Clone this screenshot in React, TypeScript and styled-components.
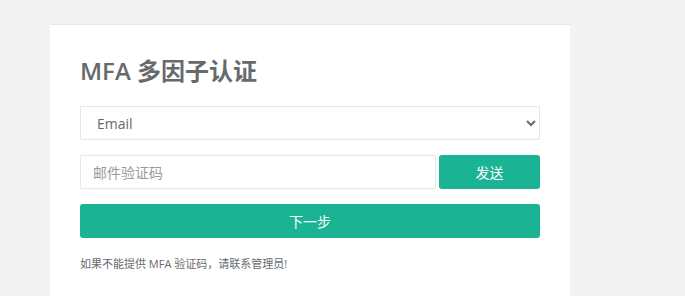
import styled, { createGlobalStyle } from 'styled-components'

const GlobalStyle = createGlobalStyle`
  html, body {
    margin: 0;
    padding: 0;
    background: #f3f3f4;
    font-family: 'Open Sans', 'Noto Sans CJK SC', sans-serif;
    color: #676a6c;
  }
`

const Page = styled.div`
  padding: 24px 0 0 50px;
  height: 272px;
  overflow: hidden;
`

const Card = styled.div`
  width: 460px;
  background: #fff;
  border-top: 1px solid #e7eaec;
  padding: 26px 30px 40px;
`

const Title = styled.h2`
  margin: 0 0 15px;
  font-size: 24px;
  font-weight: 600;
  line-height: 40px;
  color: #676a6c;
`

const Select = styled.select`
  display: block;
  width: 100%;
  height: 34px;
  padding: 0 12px;
  border: 1px solid #e5e6e7;
  border-radius: 1px;
  background: #fff;
  font-family: inherit;
  font-size: 14px;
  color: #676a6c;
  outline: none;
`

const Row = styled.div`
  display: flex;
  gap: 3px;
  margin-top: 15px;
`

const Input = styled.input`
  flex: 1;
  height: 34px;
  box-sizing: border-box;
  padding: 6px 12px;
  border: 1px solid #e5e6e7;
  border-radius: 1px;
  font-family: inherit;
  font-size: 14px;
  color: #676a6c;
  outline: none;
  &::placeholder {
    color: #999;
  }
`

const Button = styled.button<{ $wide?: boolean }>`
  width: ${p => (p.$wide ? '100%' : '101px')};
  height: 34px;
  margin-top: ${p => (p.$wide ? '15px' : '0')};
  display: block;
  border: none;
  border-radius: 3px;
  background: #1ab394;
  color: #fff;
  font-family: inherit;
  font-size: 14px;
  cursor: pointer;
`

const Hint = styled.p`
  margin: 18px 0 0;
  font-size: 11px;
  line-height: 16px;
  color: #676a6c;
`

export default function App() {
  return (
    <Page>
      <GlobalStyle />
      <Card>
        <Title>MFA 多因子认证</Title>
        <Select defaultValue="email">
          <option value="email">Email</option>
        </Select>
        <Row>
          <Input placeholder="邮件验证码" />
          <Button type="button">发送</Button>
        </Row>
        <Button type="button" $wide>下一步</Button>
        <Hint>如果不能提供 MFA 验证码，请联系管理员!</Hint>
      </Card>
    </Page>
  )
}
